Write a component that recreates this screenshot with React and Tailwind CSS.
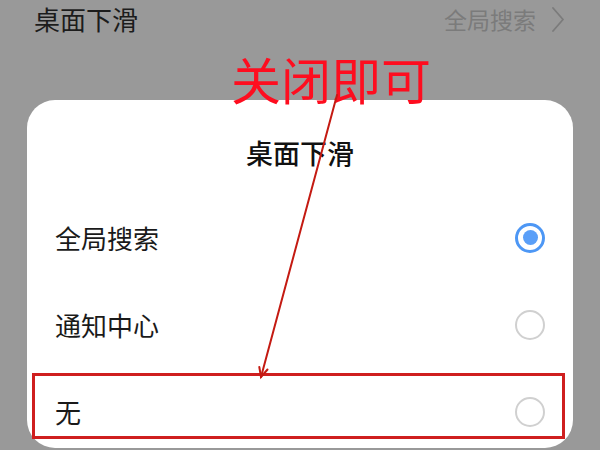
const options = [
  { label: "全局搜索", checked: true },
  { label: "通知中心", checked: false },
  { label: "无", checked: false },
];

function Radio({ checked }) {
  if (checked) {
    return (
      <div className="w-[30px] h-[30px] rounded-full border-[3px] border-[#4d97f5] flex items-center justify-center">
        <div className="w-[15px] h-[15px] rounded-full bg-[#5a9ff8]" />
      </div>
    );
  }
  return <div className="w-[30px] h-[30px] rounded-full border-[2.5px] border-[#d0d0d0]" />;
}

export default function App() {
  return (
    <div
      className="relative w-[600px] h-[450px] overflow-hidden bg-[#999999] flex flex-col"
      style={{ fontFamily: '"Noto Sans CJK SC", "Noto Sans", sans-serif' }}
    >
      {/* settings row behind the sheet */}
      <div className="h-[38px] flex items-center justify-between pl-[34px] pr-[36px]">
        <span className="text-[26px] leading-none text-[#1c1c1c]">桌面下滑</span>
        <div className="flex items-center gap-[16px]">
          <span className="text-[23px] leading-none text-[#7b7b7b]">全局搜索</span>
          <svg width="12" height="25" viewBox="0 0 12 25" fill="none">
            <polyline points="1,1 11,12.5 1,24" stroke="#7b7b7b" strokeWidth="1.8" strokeLinejoin="round" strokeLinecap="round" />
          </svg>
        </div>
      </div>

      {/* bottom sheet */}
      <div className="mt-[62px] mx-[27px] h-[348px] bg-white rounded-[28px] overflow-hidden">
        <div className="h-[94px] pt-[40px] text-center text-[27px] leading-[26px] font-medium text-[#111]">
          桌面下滑
        </div>
        {options.map((o) => (
          <div key={o.label} className="h-[87px] flex items-center justify-between pl-[28px] pr-[28px]">
            <span className="text-[26px] leading-none text-[#1a1a1a]">{o.label}</span>
            <Radio checked={o.checked} />
          </div>
        ))}
      </div>

      {/* annotation */}
      <div className="absolute left-[231px] top-[53px] text-[50px] leading-none text-[#fe0d1f]">关闭即可</div>
      <div className="absolute left-[32px] top-[373px] w-[533px] h-[66px] border-[3px] border-[#cf1f1f]" />
      <svg className="absolute left-0 top-0" width="600" height="450" viewBox="0 0 600 450">
        <g stroke="#c41a12" strokeWidth="2" fill="none" strokeLinecap="round">
          <line x1="337" y1="95" x2="261" y2="377" />
          <polyline points="259.3,367 261,377 267.5,369.5" />
        </g>
      </svg>
    </div>
  );
}
